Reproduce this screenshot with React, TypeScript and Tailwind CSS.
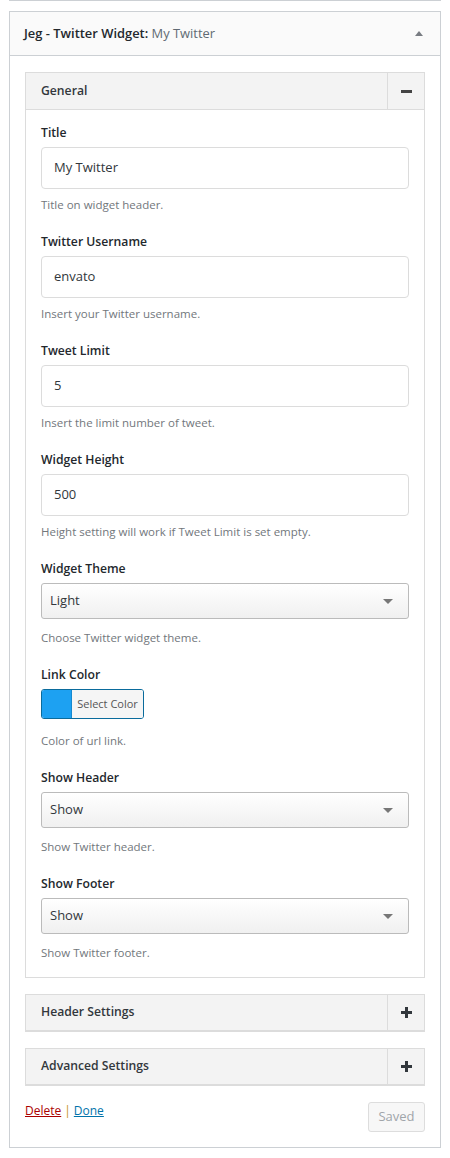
const FONT = "font-['Segoe_UI','Open_Sans','Liberation_Sans',sans-serif]";

type Field =
  | { kind: "text"; label: string; value: string; help: string }
  | { kind: "select"; label: string; value: string; help: string }
  | { kind: "color"; label: string; help: string };

const FIELDS: Field[] = [
  { kind: "text", label: "Title", value: "My Twitter", help: "Title on widget header." },
  { kind: "text", label: "Twitter Username", value: "envato", help: "Insert your Twitter username." },
  { kind: "text", label: "Tweet Limit", value: "5", help: "Insert the limit number of tweet." },
  {
    kind: "text",
    label: "Widget Height",
    value: "500",
    help: "Height setting will work if Tweet Limit is set empty.",
  },
  { kind: "select", label: "Widget Theme", value: "Light", help: "Choose Twitter widget theme." },
  { kind: "color", label: "Link Color", help: "Color of url link." },
  { kind: "select", label: "Show Header", value: "Show", help: "Show Twitter header." },
  { kind: "select", label: "Show Footer", value: "Show", help: "Show Twitter footer." },
];

function Caret() {
  return (
    <svg width="10" height="5" viewBox="0 0 10 5" className="shrink-0">
      <path d="M0 0h10L5 5z" fill="#777" />
    </svg>
  );
}

function Minus() {
  return <span className="block h-[3px] w-[11px] bg-[#444]" />;
}

function Plus() {
  return (
    <svg width="11" height="11" viewBox="0 0 11 11">
      <path d="M4 0h3v4h4v3H7v4H4V7H0V4h4z" fill="#32373c" />
    </svg>
  );
}

function FieldRow({ field, last }: { field: Field; last: boolean }) {
  return (
    <div className={last ? "" : "mb-[18px]"}>
      <p className="text-[12.2px] font-semibold leading-[20px] text-[#23282d]">{field.label}</p>

      {field.kind === "text" && (
        <div className="mt-[4px] flex h-[42px] items-center rounded-[4px] border border-[#dcdcdc] bg-white px-[12px] text-[13px] text-[#32373c]">
          {field.value}
        </div>
      )}

      {field.kind === "select" && (
        <div className="mt-[4px] flex h-[36px] items-center justify-between rounded-[3px] border border-[#bbb] bg-gradient-to-b from-white to-[#f0f0f0] pl-[8px] pr-[15px] text-[13px] text-[#32373c]">
          <span>{field.value}</span>
          <Caret />
        </div>
      )}

      {field.kind === "color" && (
        <div className="mt-[4px] flex h-[30px] w-[103px] overflow-hidden rounded-[3px] border border-[#0a6b9c]">
          <span className="w-[30px] border-r border-[#1689cf] bg-[#1da1f2]" />
          <span className="flex flex-1 items-center justify-center bg-[#f5f5f5] text-[11px] text-[#555]">
            Select Color
          </span>
        </div>
      )}

      <p
        className={`${
          field.kind === "text" ? "mt-[7px]" : field.kind === "select" ? "mt-[10px]" : "mt-[13px]"
        } text-[11.5px] leading-[18px] text-[#72777c]`}
      >
        {field.help}
      </p>
    </div>
  );
}

function CollapsedPanel({ title }: { title: string }) {
  return (
    <div className="mt-[16px] flex h-[38px] border border-b-2 border-[#dcdcdc] bg-[#f3f3f3]">
      <span className="flex flex-1 items-center pl-[15px] text-[12.2px] font-semibold text-[#32373c]">
        {title}
      </span>
      <span className="flex w-[37px] items-center justify-center border-l border-[#dcdcdc]">
        <Plus />
      </span>
    </div>
  );
}

export default function App() {
  return (
    <div className={`${FONT} min-h-screen bg-white`}>
      <div className="mx-[9px] h-px bg-[#ccd0d4]" />

      <div className="mx-[9px] mt-[10px] border border-[#ccd0d4] bg-white">
        <div className="flex h-[44px] items-center justify-between border-b border-[#ccd0d4] bg-[#fafafa] pl-[14px] pr-[17px]">
          <h3 className="text-[12.9px] font-semibold text-[#23282d]">
            Jeg - Twitter Widget: <span className="font-normal text-[#606a73]">My Twitter</span>
          </h3>
          <svg width="8" height="5" viewBox="0 0 8 5">
            <path d="M0 5h8L4 0z" fill="#787c82" />
          </svg>
        </div>

        <div className="px-[15px] pb-[15px] pt-[16px]">
          <div className="border border-[#dcdcdc]">
            <div className="flex h-[37px] border-b border-[#dcdcdc] bg-[#f3f3f3]">
              <span className="flex flex-1 items-center pl-[15px] text-[12.2px] font-semibold text-[#32373c]">
                General
              </span>
              <span className="flex w-[37px] items-center justify-center border-l border-[#dcdcdc]">
                <Minus />
              </span>
            </div>
            <div className="px-[15px] pb-[15px] pt-[13px]">
              {FIELDS.map((f, i) => (
                <FieldRow key={f.label} field={f} last={i === FIELDS.length - 1} />
              ))}
            </div>
          </div>

          <CollapsedPanel title="Header Settings" />
          <CollapsedPanel title="Advanced Settings" />

          <div className="mt-[16px] flex items-start justify-between">
            <p className="mt-[-1px] text-[12px] leading-[20px]">
              <a className="text-[#a00] underline">Delete</a>
              <span className="mx-[3px] text-[#c3902c]">|</span>
              <a className="text-[#0073aa] underline">Done</a>
            </p>
            <button className="h-[30px] w-[57px] rounded-[3px] border border-[#ddd] bg-[#f7f7f7] text-[13px] text-[#a0a5aa]">
              Saved
            </button>
          </div>
        </div>
      </div>

      <div className="mx-[9px] mt-[10px] h-[40px] border border-[#ccd0d4]" />
    </div>
  );
}
